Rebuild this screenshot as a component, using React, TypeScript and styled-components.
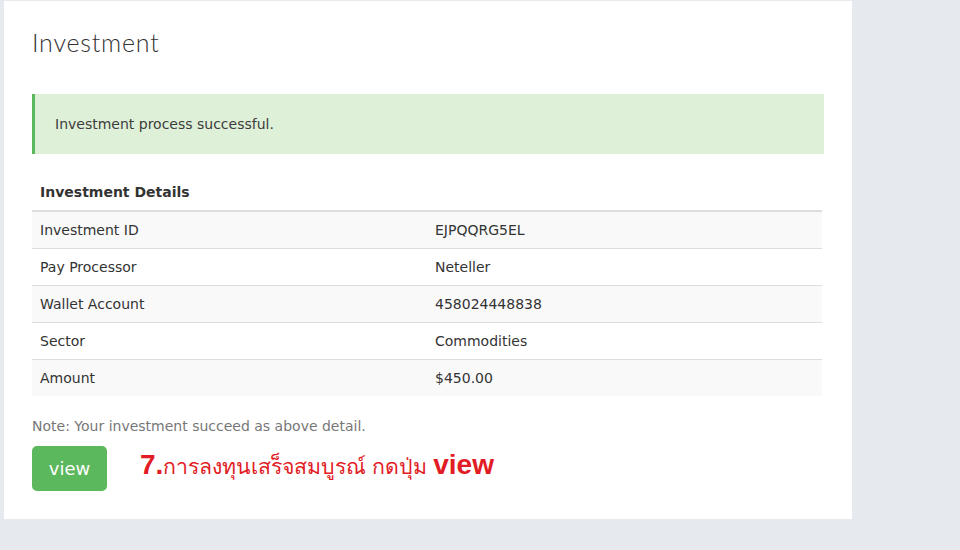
import React from 'react';
import styled, {createGlobalStyle} from 'styled-components';

const GlobalStyle = createGlobalStyle`
  html, body {
    margin: 0;
    padding: 0;
    background: #e6e9ee;
  }
  body {
    font-family: "DejaVu Sans", Verdana, sans-serif;
    color: #333;
  }
`

type RowType = {
    label: string
    value: string
}

const rows: RowType[] = [
    {label: 'Investment ID', value: 'EJPQQRG5EL'},
    {label: 'Pay Processor', value: 'Neteller'},
    {label: 'Wallet Account', value: '458024448838'},
    {label: 'Sector', value: 'Commodities'},
    {label: 'Amount', value: '$450.00'},
]

const Page = styled.div`
  width: 960px;
  height: 550px;
  padding: 1px 0 0 4px;
  box-sizing: border-box;
`

const Card = styled.div`
  width: 848px;
  height: 518px;
  background: #fff;
  padding: 28px 28px 0 28px;
  box-sizing: border-box;
`

const Title = styled.h1`
  margin: 0 0 39px 0;
  font-family: Lato, "Liberation Sans", sans-serif;
  font-weight: 300;
  font-size: 25px;
  line-height: 26px;
  color: #333;
  letter-spacing: 0.8px;
`

const Alert = styled.div`
  width: 792px;
  height: 60px;
  box-sizing: border-box;
  display: flex;
  align-items: center;
  padding-left: 20px;
  background: #dff0d8;
  border-left: 3px solid #5cb85c;
  font-size: 14px;
  color: #3c3c3c;
  margin-bottom: 19px;
`

const Table = styled.table`
  width: 790px;
  border-collapse: collapse;
  font-size: 14px;
  color: #333;
`

const HeadCell = styled.th`
  text-align: left;
  font-weight: bold;
  padding: 10px 8px 10px 8px;
  height: 38px;
  box-sizing: border-box;
  border-bottom: 2px solid #ddd;
`

const Row = styled.tr<{striped: boolean}>`
  background: ${props => props.striped ? '#f9f9f9' : '#fff'};
`

const Cell = styled.td<{last: boolean}>`
  width: 50%;
  height: 37px;
  padding: 0 8px;
  box-sizing: border-box;
  border-bottom: ${props => props.last ? '0' : '1px solid #ddd'};
`

const Note = styled.p`
  margin: 21px 0 11px 0;
  font-size: 14px;
  line-height: 18px;
  color: #777;
`

const Actions = styled.div`
  display: flex;
  align-items: center;
  gap: 33px;
`

const ViewButton = styled.button`
  width: 75px;
  height: 45px;
  border: none;
  border-radius: 5px;
  background: #5cb85c;
  color: #fff;
  font-family: "DejaVu Sans", Verdana, sans-serif;
  font-size: 18px;
  cursor: pointer;
`

const Hint = styled.span`
  font-family: "Liberation Sans", Arial, sans-serif;
  color: #e21c24;
  font-size: 21.3px;
  display: flex;
  align-items: baseline;
  margin-top: -6px;
`

const Big = styled.b`
  font-size: 28px;
  font-weight: bold;
`

const App = () => {
    return (
        <Page>
            <GlobalStyle/>
            <Card>
                <Title>Investment</Title>
                <Alert>Investment process successful.</Alert>
                <Table>
                    <thead>
                    <tr>
                        <HeadCell colSpan={2}>Investment Details</HeadCell>
                    </tr>
                    </thead>
                    <tbody>
                    {rows.map((r, i) => (
                        <Row key={r.label} striped={i % 2 === 0}>
                            <Cell last={i === rows.length - 1}>{r.label}</Cell>
                            <Cell last={i === rows.length - 1}>{r.value}</Cell>
                        </Row>
                    ))}
                    </tbody>
                </Table>
                <Note>Note: Your investment succeed as above detail.</Note>
                <Actions>
                    <ViewButton>view</ViewButton>
                    <Hint>
                        <Big>7.</Big>การลงทุนเสร็จสมบูรณ์ กดปุ่ม&nbsp;<Big>view</Big>
                    </Hint>
                </Actions>
            </Card>
        </Page>
    )
}

export default App
